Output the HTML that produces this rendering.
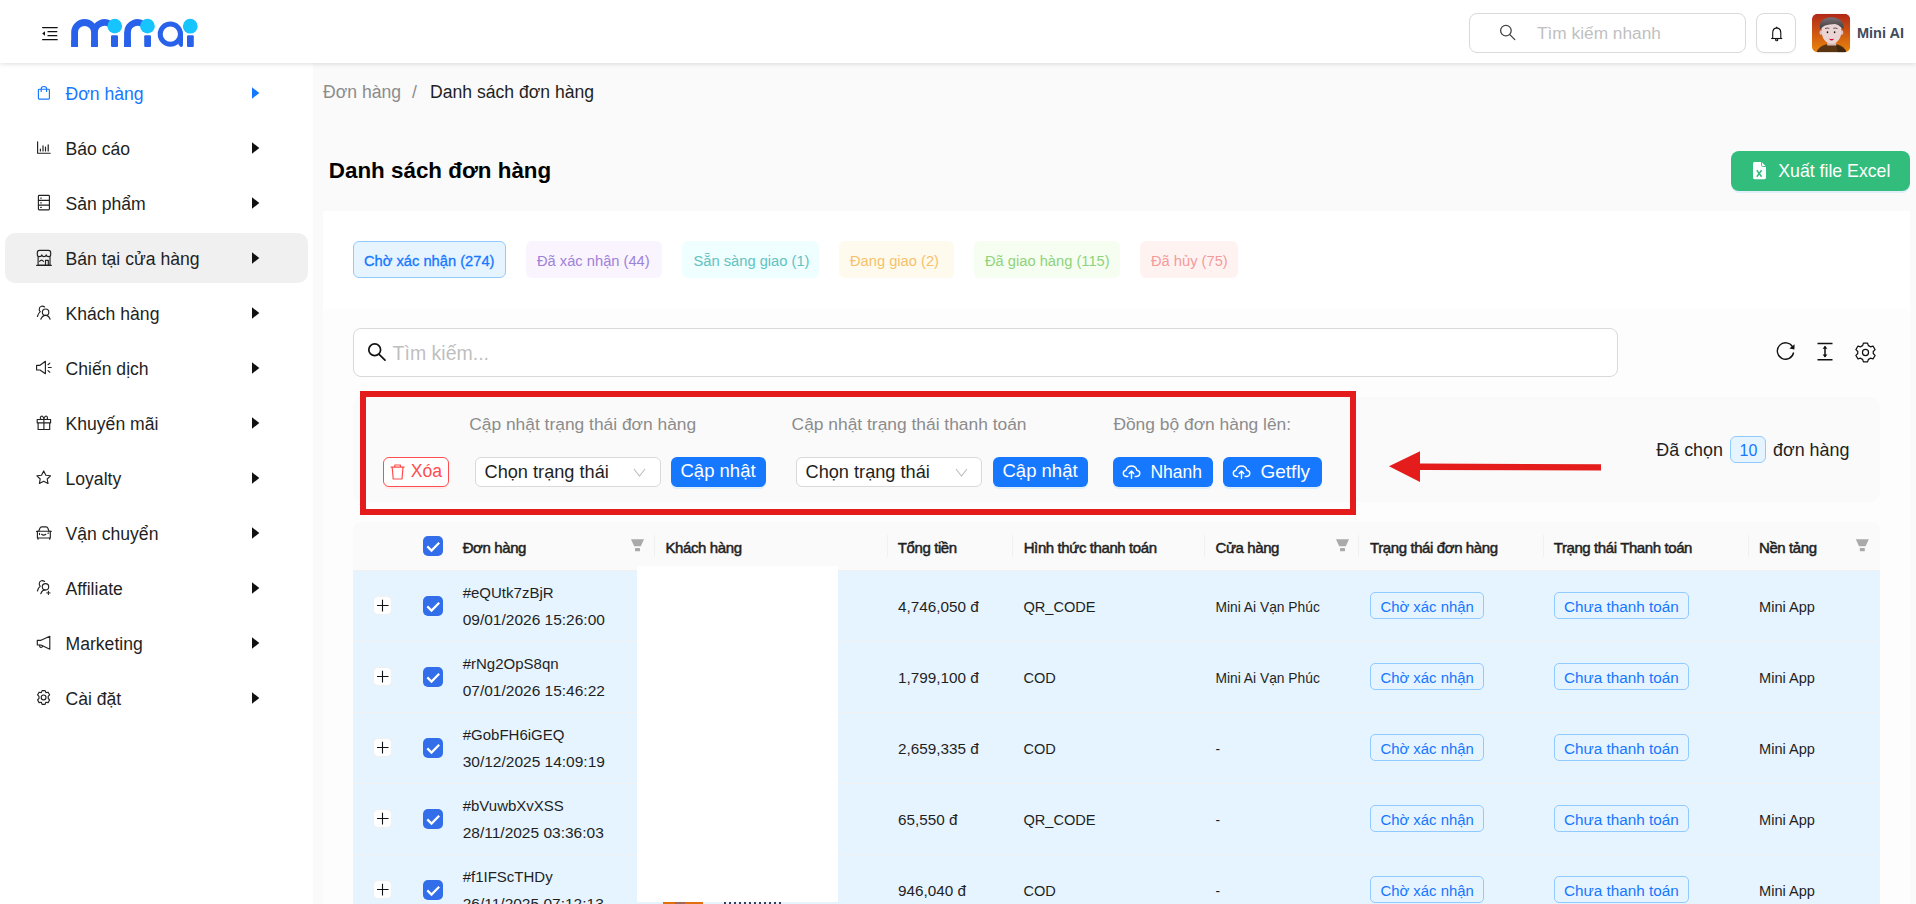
<!DOCTYPE html>
<html><head><meta charset="utf-8">
<style>
html,body{margin:0;padding:0;}
body{width:1916px;height:904px;overflow:hidden;position:relative;background:#fafafa;font-family:"Liberation Sans", sans-serif;}
.t{position:absolute;white-space:nowrap;line-height:1;}
</style></head><body>
<div style="position:absolute;left:0px;top:0px;width:1916px;height:63px;box-sizing:border-box;background:#fff;box-shadow:0 1px 5px rgba(0,0,0,0.13);z-index:2"></div>
<div style="position:absolute;left:0px;top:63px;width:313px;height:841px;box-sizing:border-box;background:#fff"></div>
<div style="position:absolute;left:5px;top:233px;width:303px;height:50px;box-sizing:border-box;background:#f0f0f0;border-radius:10px"></div>
<div class="t" style="left:65.5px;top:85.70px;font-size:17.6px;color:#1677ff;font-weight:400;">Đơn hàng</div>
<div class="t" style="left:65.5px;top:140.70px;font-size:17.6px;color:#1f1f1f;font-weight:400;">Báo cáo</div>
<div class="t" style="left:65.5px;top:195.70px;font-size:17.6px;color:#1f1f1f;font-weight:400;">Sản phẩm</div>
<div class="t" style="left:65.5px;top:250.70px;font-size:17.6px;color:#1f1f1f;font-weight:400;">Bán tại cửa hàng</div>
<div class="t" style="left:65.5px;top:305.70px;font-size:17.6px;color:#1f1f1f;font-weight:400;">Khách hàng</div>
<div class="t" style="left:65.5px;top:360.70px;font-size:17.6px;color:#1f1f1f;font-weight:400;">Chiến dịch</div>
<div class="t" style="left:65.5px;top:415.70px;font-size:17.6px;color:#1f1f1f;font-weight:400;">Khuyến mãi</div>
<div class="t" style="left:65.5px;top:470.70px;font-size:17.6px;color:#1f1f1f;font-weight:400;">Loyalty</div>
<div class="t" style="left:65.5px;top:525.70px;font-size:17.6px;color:#1f1f1f;font-weight:400;">Vận chuyển</div>
<div class="t" style="left:65.5px;top:580.70px;font-size:17.6px;color:#1f1f1f;font-weight:400;">Affiliate</div>
<div class="t" style="left:65.5px;top:635.70px;font-size:17.6px;color:#1f1f1f;font-weight:400;">Marketing</div>
<div class="t" style="left:65.5px;top:690.70px;font-size:17.6px;color:#1f1f1f;font-weight:400;">Cài đặt</div>
<div class="t" style="left:323px;top:84.10px;font-size:17.6px;color:#8c8c8c;font-weight:400;">Đơn hàng</div>
<div class="t" style="left:412px;top:84.10px;font-size:17.6px;color:#8c8c8c;font-weight:400;">/</div>
<div class="t" style="left:430px;top:84.10px;font-size:17.6px;color:#1f1f1f;font-weight:400;">Danh sách đơn hàng</div>
<div class="t" style="left:328.8px;top:160.04px;font-size:22.4px;color:#000;font-weight:700;">Danh sách đơn hàng</div>
<div style="position:absolute;left:1731px;top:151px;width:179px;height:40px;box-sizing:border-box;background:#33bd7c;border-radius:8px;box-shadow:0 2px 0 rgba(5,145,255,0.1)"></div>
<div class="t" style="left:1778.3px;top:162.82px;font-size:17.7px;color:#fff;font-weight:400;">Xuất file Excel</div>
<div style="position:absolute;left:323px;top:211px;width:1587px;height:693px;box-sizing:border-box;background:#fff"></div>
<div style="position:absolute;left:323px;top:308px;width:1587px;height:596px;box-sizing:border-box;background:#fdfdfd;border-radius:8px 8px 0 0"></div>
<div style="position:absolute;left:353px;top:241px;width:153px;height:37px;box-sizing:border-box;background:#e6f4ff;border:1px solid #91caff;border-radius:6px"></div>
<div class="t" style="left:364px;top:253.56px;font-size:14.7px;color:#1677ff;font-weight:400;-webkit-text-stroke:0.3px #1677ff">Chờ xác nhận (274)</div>
<div style="position:absolute;left:526px;top:241px;width:136px;height:37px;box-sizing:border-box;background:#faf4ff;border:none;border-radius:6px"></div>
<div class="t" style="left:537px;top:253.56px;font-size:14.7px;color:#9e82d6;font-weight:400;">Đã xác nhận (44)</div>
<div style="position:absolute;left:682px;top:241px;width:137px;height:37px;box-sizing:border-box;background:#effefe;border:none;border-radius:6px"></div>
<div class="t" style="left:693.5px;top:253.56px;font-size:14.7px;color:#62c2c2;font-weight:400;">Sẵn sàng giao (1)</div>
<div style="position:absolute;left:839px;top:241px;width:115px;height:37px;box-sizing:border-box;background:#fffaee;border:none;border-radius:6px"></div>
<div class="t" style="left:850px;top:253.56px;font-size:14.7px;color:#f5c26b;font-weight:400;">Đang giao (2)</div>
<div style="position:absolute;left:974px;top:241px;width:146px;height:37px;box-sizing:border-box;background:#f6fdf1;border:none;border-radius:6px"></div>
<div class="t" style="left:985px;top:253.56px;font-size:14.7px;color:#8fd47a;font-weight:400;">Đã giao hàng (115)</div>
<div style="position:absolute;left:1140px;top:241px;width:98px;height:37px;box-sizing:border-box;background:#fff3f2;border:none;border-radius:6px"></div>
<div class="t" style="left:1151px;top:253.56px;font-size:14.7px;color:#f59a9a;font-weight:400;">Đã hủy (75)</div>
<div style="position:absolute;left:353px;top:328px;width:1265px;height:49px;box-sizing:border-box;border:1px solid #d9d9d9;border-radius:8px;background:#fff"></div>
<div class="t" style="left:392.6px;top:344.49px;font-size:19.5px;color:#bfbfbf;font-weight:400;">Tìm kiếm...</div>
<div style="position:absolute;left:353px;top:397px;width:1527px;height:105px;box-sizing:border-box;background:#fafafa;border-radius:10px"></div>
<div style="position:absolute;left:383px;top:457px;width:66px;height:30px;box-sizing:border-box;border:1px solid #ff4d4f;border-radius:6px;background:#fff;box-shadow:0 2px 0 rgba(255,38,5,0.06)"></div>
<div class="t" style="left:410.8px;top:463.10px;font-size:17.6px;color:#ff4d4f;font-weight:400;">Xóa</div>
<div class="t" style="left:469.2px;top:416.27px;font-size:17.4px;color:#8c8c8c;font-weight:400;">Cập nhật trạng thái đơn hàng</div>
<div class="t" style="left:791.6px;top:416.27px;font-size:17.4px;color:#8c8c8c;font-weight:400;">Cập nhật trạng thái thanh toán</div>
<div class="t" style="left:1113.4px;top:416.27px;font-size:17.4px;color:#8c8c8c;font-weight:400;">Đồng bộ đơn hàng lên:</div>
<div style="position:absolute;left:475px;top:457px;width:186px;height:30px;box-sizing:border-box;border:1px solid #d9d9d9;border-radius:6px;background:#fff"></div>
<div class="t" style="left:484.5px;top:462.59px;font-size:18.2px;color:#1f1f1f;font-weight:400;">Chọn trạng thái</div>
<div style="position:absolute;left:796px;top:457px;width:186px;height:30px;box-sizing:border-box;border:1px solid #d9d9d9;border-radius:6px;background:#fff"></div>
<div class="t" style="left:805.5px;top:462.59px;font-size:18.2px;color:#1f1f1f;font-weight:400;">Chọn trạng thái</div>
<div style="position:absolute;left:671px;top:457px;width:95px;height:30px;box-sizing:border-box;background:#1677ff;border-radius:6px;box-shadow:0 2px 0 rgba(5,145,255,0.1)"></div>
<div class="t" style="left:680.5px;top:462.34px;font-size:18.5px;color:#fff;font-weight:400;">Cập nhật</div>
<div style="position:absolute;left:993px;top:457px;width:95px;height:30px;box-sizing:border-box;background:#1677ff;border-radius:6px;box-shadow:0 2px 0 rgba(5,145,255,0.1)"></div>
<div class="t" style="left:1002.5px;top:462.34px;font-size:18.5px;color:#fff;font-weight:400;">Cập nhật</div>
<div style="position:absolute;left:1113px;top:457px;width:100px;height:30px;box-sizing:border-box;background:#1677ff;border-radius:6px;box-shadow:0 2px 0 rgba(5,145,255,0.1)"></div>
<div class="t" style="left:1150.4px;top:464.19px;font-size:17.5px;color:#fff;font-weight:400;">Nhanh</div>
<div style="position:absolute;left:1223px;top:457px;width:99px;height:30px;box-sizing:border-box;background:#1677ff;border-radius:6px;box-shadow:0 2px 0 rgba(5,145,255,0.1)"></div>
<div class="t" style="left:1260.5px;top:461.92px;font-size:19px;color:#fff;font-weight:400;">Getfly</div>
<div class="t" style="left:1656.3px;top:441.85px;font-size:17.9px;color:#1f1f1f;font-weight:400;">Đã chọn</div>
<div style="position:absolute;left:1730px;top:436px;width:36px;height:27px;box-sizing:border-box;background:#e6f4ff;border:1px solid #91caff;border-radius:6px"></div>
<div class="t" style="left:1739.5px;top:442.96px;font-size:16px;color:#1677ff;font-weight:400;">10</div>
<div class="t" style="left:1773px;top:441.85px;font-size:17.9px;color:#1f1f1f;font-weight:400;">đơn hàng</div>
<div style="position:absolute;left:360px;top:391px;width:996px;height:124px;box-sizing:border-box;border:6px solid #e41c1c"></div>
<div style="position:absolute;left:353px;top:522px;width:1527px;height:49px;box-sizing:border-box;background:#fafafa;border-radius:8px 8px 0 0;border-bottom:1px solid #f0f0f0"></div>
<div class="t" style="left:462.7px;top:539.60px;font-size:15px;color:#1f1f1f;font-weight:400;letter-spacing:-0.4px;-webkit-text-stroke:0.5px #1f1f1f">Đơn hàng</div>
<div class="t" style="left:665.5px;top:539.60px;font-size:15px;color:#1f1f1f;font-weight:400;letter-spacing:-0.4px;-webkit-text-stroke:0.5px #1f1f1f">Khách hàng</div>
<div class="t" style="left:897.8px;top:539.60px;font-size:15px;color:#1f1f1f;font-weight:400;letter-spacing:-0.4px;-webkit-text-stroke:0.5px #1f1f1f">Tổng tiền</div>
<div class="t" style="left:1023.7px;top:539.60px;font-size:15px;color:#1f1f1f;font-weight:400;letter-spacing:-0.4px;-webkit-text-stroke:0.5px #1f1f1f">Hình thức thanh toán</div>
<div class="t" style="left:1215.5px;top:539.60px;font-size:15px;color:#1f1f1f;font-weight:400;letter-spacing:-0.4px;-webkit-text-stroke:0.5px #1f1f1f">Cửa hàng</div>
<div class="t" style="left:1370px;top:539.60px;font-size:15px;color:#1f1f1f;font-weight:400;letter-spacing:-0.4px;-webkit-text-stroke:0.5px #1f1f1f">Trạng thái đơn hàng</div>
<div class="t" style="left:1553.7px;top:539.60px;font-size:15px;color:#1f1f1f;font-weight:400;letter-spacing:-0.4px;-webkit-text-stroke:0.5px #1f1f1f">Trạng thái Thanh toán</div>
<div class="t" style="left:1759px;top:539.60px;font-size:15px;color:#1f1f1f;font-weight:400;letter-spacing:-0.4px;-webkit-text-stroke:0.5px #1f1f1f">Nền tảng</div>
<div style="position:absolute;left:654px;top:535px;width:1px;height:22px;box-sizing:border-box;background:#f0f0f0"></div>
<div style="position:absolute;left:887px;top:535px;width:1px;height:22px;box-sizing:border-box;background:#f0f0f0"></div>
<div style="position:absolute;left:1012px;top:535px;width:1px;height:22px;box-sizing:border-box;background:#f0f0f0"></div>
<div style="position:absolute;left:1204px;top:535px;width:1px;height:22px;box-sizing:border-box;background:#f0f0f0"></div>
<div style="position:absolute;left:1358px;top:535px;width:1px;height:22px;box-sizing:border-box;background:#f0f0f0"></div>
<div style="position:absolute;left:1543px;top:535px;width:1px;height:22px;box-sizing:border-box;background:#f0f0f0"></div>
<div style="position:absolute;left:1748px;top:535px;width:1px;height:22px;box-sizing:border-box;background:#f0f0f0"></div>
<div style="position:absolute;left:353px;top:571px;width:1527px;height:71px;box-sizing:border-box;background:#e6f4ff;border-bottom:1px solid #f0f0f0"></div>
<div style="position:absolute;left:373px;top:596px;width:19px;height:19px;box-sizing:border-box;background:#fff;border:1px solid #f0f0f0;border-radius:5px"></div>
<div style="position:absolute;left:423px;top:596px;width:20px;height:20px;box-sizing:border-box;background:#326ee9;border-radius:5px"></div>
<div class="t" style="left:462.7px;top:585.30px;font-size:15px;color:#1f1f1f;font-weight:400;">#eQUtk7zBjR</div>
<div class="t" style="left:462.7px;top:611.88px;font-size:15.5px;color:#1f1f1f;font-weight:400;">09/01/2026 15:26:00</div>
<div class="t" style="left:898px;top:599.35px;font-size:15.3px;color:#1f1f1f;font-weight:400;">4,746,050 đ</div>
<div class="t" style="left:1023.4px;top:599.94px;font-size:14.6px;color:#1f1f1f;font-weight:400;">QR_CODE</div>
<div class="t" style="left:1215.5px;top:600.62px;font-size:13.8px;color:#1f1f1f;font-weight:400;">Mini Ai Vạn Phúc</div>
<div style="position:absolute;left:1370px;top:592px;width:114px;height:27px;box-sizing:border-box;border:1px solid #91caff;border-radius:5px"></div>
<div class="t" style="left:1380.4px;top:599.69px;font-size:14.9px;color:#1677ff;font-weight:400;">Chờ xác nhận</div>
<div style="position:absolute;left:1554px;top:592px;width:135px;height:27px;box-sizing:border-box;border:1px solid #91caff;border-radius:5px"></div>
<div class="t" style="left:1564px;top:599.35px;font-size:15.3px;color:#1677ff;font-weight:400;">Chưa thanh toán</div>
<div class="t" style="left:1759px;top:599.94px;font-size:14.6px;color:#1f1f1f;font-weight:400;">Mini App</div>
<div style="position:absolute;left:353px;top:642px;width:1527px;height:71px;box-sizing:border-box;background:#e6f4ff;border-bottom:1px solid #f0f0f0"></div>
<div style="position:absolute;left:373px;top:667px;width:19px;height:19px;box-sizing:border-box;background:#fff;border:1px solid #f0f0f0;border-radius:5px"></div>
<div style="position:absolute;left:423px;top:667px;width:20px;height:20px;box-sizing:border-box;background:#326ee9;border-radius:5px"></div>
<div class="t" style="left:462.7px;top:656.30px;font-size:15px;color:#1f1f1f;font-weight:400;">#rNg2OpS8qn</div>
<div class="t" style="left:462.7px;top:682.88px;font-size:15.5px;color:#1f1f1f;font-weight:400;">07/01/2026 15:46:22</div>
<div class="t" style="left:898px;top:670.35px;font-size:15.3px;color:#1f1f1f;font-weight:400;">1,799,100 đ</div>
<div class="t" style="left:1023.4px;top:670.94px;font-size:14.6px;color:#1f1f1f;font-weight:400;">COD</div>
<div class="t" style="left:1215.5px;top:671.62px;font-size:13.8px;color:#1f1f1f;font-weight:400;">Mini Ai Vạn Phúc</div>
<div style="position:absolute;left:1370px;top:663px;width:114px;height:27px;box-sizing:border-box;border:1px solid #91caff;border-radius:5px"></div>
<div class="t" style="left:1380.4px;top:670.69px;font-size:14.9px;color:#1677ff;font-weight:400;">Chờ xác nhận</div>
<div style="position:absolute;left:1554px;top:663px;width:135px;height:27px;box-sizing:border-box;border:1px solid #91caff;border-radius:5px"></div>
<div class="t" style="left:1564px;top:670.35px;font-size:15.3px;color:#1677ff;font-weight:400;">Chưa thanh toán</div>
<div class="t" style="left:1759px;top:670.94px;font-size:14.6px;color:#1f1f1f;font-weight:400;">Mini App</div>
<div style="position:absolute;left:353px;top:713px;width:1527px;height:71px;box-sizing:border-box;background:#e6f4ff;border-bottom:1px solid #f0f0f0"></div>
<div style="position:absolute;left:373px;top:738px;width:19px;height:19px;box-sizing:border-box;background:#fff;border:1px solid #f0f0f0;border-radius:5px"></div>
<div style="position:absolute;left:423px;top:738px;width:20px;height:20px;box-sizing:border-box;background:#326ee9;border-radius:5px"></div>
<div class="t" style="left:462.7px;top:727.30px;font-size:15px;color:#1f1f1f;font-weight:400;">#GobFH6iGEQ</div>
<div class="t" style="left:462.7px;top:753.88px;font-size:15.5px;color:#1f1f1f;font-weight:400;">30/12/2025 14:09:19</div>
<div class="t" style="left:898px;top:741.35px;font-size:15.3px;color:#1f1f1f;font-weight:400;">2,659,335 đ</div>
<div class="t" style="left:1023.4px;top:741.94px;font-size:14.6px;color:#1f1f1f;font-weight:400;">COD</div>
<div class="t" style="left:1215.5px;top:742.62px;font-size:13.8px;color:#1f1f1f;font-weight:400;">-</div>
<div style="position:absolute;left:1370px;top:734px;width:114px;height:27px;box-sizing:border-box;border:1px solid #91caff;border-radius:5px"></div>
<div class="t" style="left:1380.4px;top:741.69px;font-size:14.9px;color:#1677ff;font-weight:400;">Chờ xác nhận</div>
<div style="position:absolute;left:1554px;top:734px;width:135px;height:27px;box-sizing:border-box;border:1px solid #91caff;border-radius:5px"></div>
<div class="t" style="left:1564px;top:741.35px;font-size:15.3px;color:#1677ff;font-weight:400;">Chưa thanh toán</div>
<div class="t" style="left:1759px;top:741.94px;font-size:14.6px;color:#1f1f1f;font-weight:400;">Mini App</div>
<div style="position:absolute;left:353px;top:784px;width:1527px;height:71px;box-sizing:border-box;background:#e6f4ff;border-bottom:1px solid #f0f0f0"></div>
<div style="position:absolute;left:373px;top:809px;width:19px;height:19px;box-sizing:border-box;background:#fff;border:1px solid #f0f0f0;border-radius:5px"></div>
<div style="position:absolute;left:423px;top:809px;width:20px;height:20px;box-sizing:border-box;background:#326ee9;border-radius:5px"></div>
<div class="t" style="left:462.7px;top:798.30px;font-size:15px;color:#1f1f1f;font-weight:400;">#bVuwbXvXSS</div>
<div class="t" style="left:462.7px;top:824.88px;font-size:15.5px;color:#1f1f1f;font-weight:400;">28/11/2025 03:36:03</div>
<div class="t" style="left:898px;top:812.35px;font-size:15.3px;color:#1f1f1f;font-weight:400;">65,550 đ</div>
<div class="t" style="left:1023.4px;top:812.94px;font-size:14.6px;color:#1f1f1f;font-weight:400;">QR_CODE</div>
<div class="t" style="left:1215.5px;top:813.62px;font-size:13.8px;color:#1f1f1f;font-weight:400;">-</div>
<div style="position:absolute;left:1370px;top:805px;width:114px;height:27px;box-sizing:border-box;border:1px solid #91caff;border-radius:5px"></div>
<div class="t" style="left:1380.4px;top:812.69px;font-size:14.9px;color:#1677ff;font-weight:400;">Chờ xác nhận</div>
<div style="position:absolute;left:1554px;top:805px;width:135px;height:27px;box-sizing:border-box;border:1px solid #91caff;border-radius:5px"></div>
<div class="t" style="left:1564px;top:812.35px;font-size:15.3px;color:#1677ff;font-weight:400;">Chưa thanh toán</div>
<div class="t" style="left:1759px;top:812.94px;font-size:14.6px;color:#1f1f1f;font-weight:400;">Mini App</div>
<div style="position:absolute;left:353px;top:855px;width:1527px;height:71px;box-sizing:border-box;background:#e6f4ff;border-bottom:1px solid #f0f0f0"></div>
<div style="position:absolute;left:373px;top:880px;width:19px;height:19px;box-sizing:border-box;background:#fff;border:1px solid #f0f0f0;border-radius:5px"></div>
<div style="position:absolute;left:423px;top:880px;width:20px;height:20px;box-sizing:border-box;background:#326ee9;border-radius:5px"></div>
<div class="t" style="left:462.7px;top:869.30px;font-size:15px;color:#1f1f1f;font-weight:400;">#f1IFScTHDy</div>
<div class="t" style="left:462.7px;top:895.88px;font-size:15.5px;color:#1f1f1f;font-weight:400;">26/11/2025 07:12:13</div>
<div class="t" style="left:898px;top:883.35px;font-size:15.3px;color:#1f1f1f;font-weight:400;">946,040 đ</div>
<div class="t" style="left:1023.4px;top:883.94px;font-size:14.6px;color:#1f1f1f;font-weight:400;">COD</div>
<div class="t" style="left:1215.5px;top:884.62px;font-size:13.8px;color:#1f1f1f;font-weight:400;">-</div>
<div style="position:absolute;left:1370px;top:876px;width:114px;height:27px;box-sizing:border-box;border:1px solid #91caff;border-radius:5px"></div>
<div class="t" style="left:1380.4px;top:883.69px;font-size:14.9px;color:#1677ff;font-weight:400;">Chờ xác nhận</div>
<div style="position:absolute;left:1554px;top:876px;width:135px;height:27px;box-sizing:border-box;border:1px solid #91caff;border-radius:5px"></div>
<div class="t" style="left:1564px;top:883.35px;font-size:15.3px;color:#1677ff;font-weight:400;">Chưa thanh toán</div>
<div class="t" style="left:1759px;top:883.94px;font-size:14.6px;color:#1f1f1f;font-weight:400;">Mini App</div>
<div style="position:absolute;left:423px;top:536px;width:20px;height:20px;box-sizing:border-box;background:#326ee9;border-radius:5px"></div>
<div style="position:absolute;left:637px;top:566px;width:201px;height:336px;box-sizing:border-box;background:#fff"></div>
<div style="position:absolute;left:663px;top:902px;width:40px;height:2px;box-sizing:border-box;background:linear-gradient(90deg,#e0700f 0,#e0700f 30%,#a06a5a 30%,#a06a5a 55%,#e0700f 55%)"></div>
<div style="position:absolute;left:724px;top:902px;width:60px;height:2px;box-sizing:border-box;background:repeating-linear-gradient(90deg,#3a3a5a 0,#3a3a5a 2px,transparent 2px,transparent 5px)"></div>
<div style="position:absolute;left:1469px;top:13px;width:277px;height:40px;box-sizing:border-box;border:1px solid #d9d9d9;border-radius:8px;background:#fff;z-index:3"></div>
<div class="t" style="left:1537px;top:24.86px;font-size:17.3px;color:#bfbfbf;font-weight:400;z-index:4">Tìm kiếm nhanh</div>
<div style="position:absolute;left:1756px;top:13px;width:40px;height:40px;box-sizing:border-box;border:1px solid #d9d9d9;border-radius:8px;background:#fff;box-shadow:0 2px 0 rgba(0,0,0,0.02);z-index:3"></div>
<div class="t" style="left:1857px;top:26.03px;font-size:14.5px;color:#404c5c;font-weight:700;z-index:4">Mini AI</div>

<svg style="position:absolute;left:0;top:0;z-index:10" width="1916" height="904" viewBox="0 0 1916 904">
<defs>
<linearGradient id="avg" x1="0" y1="0" x2="0" y2="1"><stop offset="0" stop-color="#b02818"/><stop offset="1" stop-color="#ea860c"/></linearGradient>
<linearGradient id="hair" x1="0" y1="0" x2="0" y2="1"><stop offset="0" stop-color="#7a7276"/><stop offset="1" stop-color="#3f383c"/></linearGradient>
<clipPath id="avc"><rect x="1812" y="13.8" width="38.2" height="38.4" rx="5.5"/></clipPath>
</defs>
<!-- hamburger -->
<g stroke="#111" stroke-width="1.25" fill="none" stroke-linecap="round">
<path d="M42.6 27.5H57.2M48 31.7H56.8M48 35.7H56.8M42.6 39.7H57.2"/>
</g>
<path d="M42.2 33.5L45 31.2V35.8Z" fill="#111"/>
<!-- logo -->
<g fill="none" stroke="#2962ea" stroke-width="6.8">
<path d="M74.6 47V32.45A9.95 9.95 0 0 1 94.5 32.45V47"/>
<path d="M94.5 32.45A9.95 9.95 0 0 1 112 26"/>
<path d="M127.5 47V32.45A9.95 9.95 0 0 1 145 26"/>
</g>
<g fill="#2962ea">
<rect x="111" y="35.3" width="7" height="11.7" rx="1.2"/>
<rect x="144.2" y="35.3" width="6.8" height="11.7" rx="1.2"/>
<rect x="187" y="35.3" width="6.8" height="11.7" rx="1.2"/>
<rect x="71.2" y="40" width="6.8" height="7" rx="1.2"/>
<rect x="91.1" y="40" width="6.8" height="7" rx="1.2"/>
<rect x="124.1" y="40" width="6.8" height="7" rx="1.2"/>
<path d="M178 34.1H183V45A2 2 0 0 1 181 47H180.5L178.5 44.5Z"/>
</g>
<circle cx="170.35" cy="34.1" r="10.15" fill="none" stroke="#2962ea" stroke-width="5"/>
<g fill="#17c5fe">
<circle cx="114.75" cy="26.15" r="7.35"/>
<circle cx="147.45" cy="26.15" r="7.35"/>
<circle cx="190.25" cy="26.15" r="7.4"/>
</g>
<!-- header search icon -->
<g fill="none" stroke="#444" stroke-width="1.3" stroke-linecap="round">
<circle cx="1505.9" cy="30.6" r="5.3"/>
<path d="M1509.8 34.6L1514.8 39.6"/>
</g>
<!-- bell -->
<g fill="none" stroke="#111" stroke-width="1.1" stroke-linejoin="round">
<path d="M1772.7 38.4V32.9Q1772.7 28.3 1776.7 27.9Q1780.8 28.3 1780.8 32.9V38.4"/>
<path d="M1771.2 38.5H1782.2"/>
<path d="M1776.7 27.9V26.7"/>
<circle cx="1776.7" cy="39.7" r="1.1"/>
</g>
<!-- avatar -->
<g clip-path="url(#avc)">
<rect x="1812" y="13.8" width="38.2" height="38.4" fill="url(#avg)"/>
<path d="M1816.5 52.5Q1818.5 46 1826.5 44.2H1837Q1845 46 1846.5 52.5Z" fill="#5a3513"/>
<path d="M1836 45Q1843 46.5 1846.5 52.5H1838Z" fill="#2e1c0c" opacity="0.6"/>
<rect x="1827.2" y="39" width="9" height="6.5" fill="#d8b8b8"/>
<ellipse cx="1820.9" cy="32.6" rx="1.4" ry="2.4" fill="#dcbcbc"/>
<ellipse cx="1841.9" cy="32.6" rx="1.4" ry="2.4" fill="#dcbcbc"/>
<path d="M1821.6 27Q1821.6 23 1831.5 23Q1841.4 23 1841.4 28V32.5Q1841 38 1837 41.8Q1834.5 43.8 1831.5 43.8Q1828.5 43.8 1826 41.8Q1822 38 1821.6 32.5Z" fill="#ead4d4"/>
<path d="M1820 29.5Q1819 23 1822.5 20Q1826 17 1831 17.2Q1837.5 17.5 1841 20.5Q1844 23.5 1843.5 29.5Q1842 27.5 1840 26.5Q1838.5 24.5 1835 24Q1829 24 1825 25.5Q1822 27 1820 29.5Z" fill="url(#hair)"/>
<path d="M1825 28.6Q1827.2 27.6 1829.3 28.3M1833.3 28.3Q1835.4 27.6 1837.5 28.6" stroke="#4a3f42" stroke-width="0.9" fill="none"/>
<ellipse cx="1827.5" cy="32.3" rx="0.8" ry="1" fill="#111"/>
<ellipse cx="1834.6" cy="32.3" rx="0.8" ry="1" fill="#111"/>
<path d="M1829.2 38.3H1834Q1833.8 40.6 1831.6 40.6Q1829.4 40.6 1829.2 38.3Z" fill="#c8102e"/>
<rect x="1829.4" y="38.1" width="4.4" height="0.8" fill="#f3f0f0"/>
</g>
<!-- sidebar icons -->
<g fill="none" stroke="#1677ff" stroke-width="1.15" stroke-linejoin="round">
<rect x="38.4" y="89.2" width="11" height="9.9" rx="0.8"/>
<path d="M41.2 92V89Q41.2 86.5 43.9 86.5Q46.6 86.5 46.6 89V92"/>
</g>
<g fill="none" stroke="#222" stroke-width="1.15" stroke-linecap="round" stroke-linejoin="round">
<!-- chart -->
<path d="M37.6 141.8V153.2H50.2"/>
<path d="M40.4 149.2V151M43 145.8V151M45.5 147.2V151M48.2 144.8V151" stroke-width="1.2"/>
<!-- server -->
<rect x="38.4" y="195.4" width="11" height="14.5" rx="0.8"/>
<path d="M38.4 200.4H49.4M38.4 205.1H49.4"/>
<path d="M40.7 198.1H41.3M40.7 202.8H41.3M40.7 207.4H41.3"/>
<!-- store -->
<path d="M37.3 253Q37.3 250.4 39.5 250.4H48.5Q50.7 250.4 50.7 253V254.5Q50.7 256.6 48.6 256.6Q46.5 256.6 46.2 254.8Q45.8 256.6 44 256.6Q42.2 256.6 41.8 254.8Q41.5 256.6 39.4 256.6Q37.3 256.6 37.3 254.5Z"/>
<path d="M38.1 256.6V265H50V256.6M36.6 265.3H51.4"/>
<path d="M45.5 265V260.3H48.3V265M39.6 261.4Q41.5 258.8 43.5 261.4"/>
<!-- users -->
<circle cx="45.6" cy="312.2" r="3.2"/>
<path d="M40.8 319.2Q42.3 315.3 45.6 315.3Q48.8 315.3 50.1 319.2"/>
<path d="M44.6 307Q43.2 305.9 41.4 306.2Q39.3 306.7 39.2 309.2Q39.3 310.8 40.3 311.6Q38.4 313 37.4 316.5"/>
<!-- megaphone sound -->
<path d="M36.6 365.3H40L45.4 361.3V373.7L40 370H36.6Z"/>
<path d="M48 364.7L49.8 363.1M48.4 367.5H51.2M48 370.6L49.8 372.2"/>
<!-- gift -->
<path d="M37.2 419.5H50.6V422.8H37.2ZM38.1 422.8V429.5H49.7V422.8M43.9 419.5V429.5"/>
<path d="M43.9 419.3Q40 420 40.3 417.6Q40.8 415.8 42.3 416.3Q43.6 416.9 43.9 419.3Q44.2 416.9 45.5 416.3Q47 415.8 47.5 417.6Q47.8 420 43.9 419.3"/>
<!-- star -->
<path d="M43.7 470.9L45.9 475.2L50.5 475.8L47.2 479L48 483.5L43.7 481.3L39.4 483.5L40.2 479L36.9 475.8L41.5 475.2Z"/>
<!-- car -->
<path d="M37.4 531.2H50.3V538H37.4Z"/>
<path d="M38.7 531.2L39.9 528.2Q40.4 526.9 41.8 526.9H46Q47.4 526.9 47.9 528.2L49 531.2"/>
<path d="M36.5 531.3H37.4M50.3 531.3H51.3M38 538V539.2M49.7 538V539.2"/>
<path d="M39.5 533.3V534.6M41.6 534.3Q43.6 535.9 45.8 534.3M48 533.3L48.6 533"/>
<!-- affiliate -->
<circle cx="45.5" cy="586.8" r="3.2"/>
<path d="M40.8 593.7Q42.3 589.9 45.2 589.9"/>
<path d="M44.6 581.5Q43.2 580.4 41.4 580.7Q39.3 581.2 39.2 583.7Q39.3 585.3 40.3 586.1Q38.4 587.5 37.4 591"/>
<path d="M48.4 591.2V594.6M46.7 592.9H50.1" stroke-width="1"/>
<!-- megaphone -->
<path d="M37.3 640.3H41L49.8 636.3V649.2L41 645H37.3Z"/>
<path d="M39.8 645.2Q39.3 647.3 41 647.5Q42.3 647.5 42.6 646.2"/>
<!-- gear -->
<path d="M42.1 690.6H45.1L45.9 692.6L48.1 692.2L49.6 694.8L48.2 696.4V698.4L49.6 700L48.1 702.6L45.9 702.3L45.1 704.3H42.1L41.3 702.3L39.1 702.6L37.6 700L39 698.4V696.4L37.6 694.8L39.1 692.2L41.3 692.6Z"/>
<circle cx="43.6" cy="697.4" r="2.4"/>
</g>
<!-- sidebar arrows -->
<g fill="#111">
<path d="M252 87.3V98.7L259.3 93Z" fill="#1677ff"/>
<path d="M252 142.3V153.7L259.3 148Z"/>
<path d="M252 197.3V208.7L259.3 203Z"/>
<path d="M252 252.3V263.7L259.3 258Z"/>
<path d="M252 307.3V318.7L259.3 313Z"/>
<path d="M252 362.3V373.7L259.3 368Z"/>
<path d="M252 417.3V428.7L259.3 423Z"/>
<path d="M252 472.3V483.7L259.3 478Z"/>
<path d="M252 527.3V538.7L259.3 533Z"/>
<path d="M252 582.3V593.7L259.3 588Z"/>
<path d="M252 637.3V648.7L259.3 643Z"/>
<path d="M252 692.3V703.7L259.3 698Z"/>
</g>
<!-- excel icon -->
<path d="M1754.5 162H1761.5L1766 166.5V177.6Q1766 179.2 1764.4 179.2H1754.6Q1753 179.2 1753 177.6V163.6Q1753 162 1754.5 162Z" fill="#fff"/>
<path d="M1761.5 162V165.2Q1761.5 166.5 1762.8 166.5H1766" fill="none" stroke="#33bd7c" stroke-width="0.9"/>
<path d="M1756.8 170.2L1761.6 176.8M1761.6 170.2L1756.8 176.8" stroke="#33bd7c" stroke-width="1.5"/>
<!-- content search icon -->
<g fill="none" stroke="#111" stroke-width="1.7" stroke-linecap="round">
<circle cx="374.7" cy="349.7" r="5.9"/>
<path d="M379.1 354.3L385 360.2"/>
</g>
<!-- reload -->
<g fill="none" stroke="#111" stroke-width="1.35">
<path d="M1792.6 346.8A8.2 8.2 0 1 0 1793.6 352.5"/>
</g>
<path d="M1794.6 344.2L1794.4 349.4L1789.4 348.4Z" fill="#111"/>
<!-- column height -->
<g fill="none" stroke="#111" stroke-width="1.5">
<path d="M1817.5 343.4H1832.5M1817.5 359.8H1832.5M1825 346.5V356.7"/>
</g>
<path d="M1822.6 348.8L1825 345.8L1827.4 348.8ZM1822.6 354.4L1825 357.4L1827.4 354.4Z" fill="#111"/>
<!-- gear setting -->
<g fill="none" stroke="#111" stroke-width="1.3" stroke-linejoin="round" transform="translate(1865.5 352.5) scale(0.95) translate(-1865.5 -352.5)">
<path d="M1863.3 342.6H1867.7L1868.5 345.3Q1869.7 345.8 1870.7 346.5L1873.4 345.7L1875.6 349.5L1873.6 351.5Q1873.8 352.7 1873.6 353.5L1875.6 355.5L1873.4 359.3L1870.7 358.5Q1869.7 359.2 1868.5 359.7L1867.7 362.4H1863.3L1862.5 359.7Q1861.3 359.2 1860.3 358.5L1857.6 359.3L1855.4 355.5L1857.4 353.5Q1857.2 352.5 1857.4 351.5L1855.4 349.5L1857.6 345.7L1860.3 346.5Q1861.3 345.8 1862.5 345.3Z"/>
<circle cx="1865.5" cy="352.5" r="3.2"/>
</g>
<!-- trash -->
<g fill="none" stroke="#ff4d4f" stroke-width="1.2" stroke-linejoin="round">
<path d="M390.6 467.2H404.6M394.8 467.2V465H400.4V467.2M392.2 467.2L393.2 479H402L403 467.2"/>
</g>
<!-- select chevrons -->
<g fill="none" stroke="#bfbfbf" stroke-width="1.1">
<path d="M634 469L639.5 476.2L645 469"/>
<path d="M956 469L961.5 476.2L967 469"/>
</g>
<!-- cloud upload -->
<g fill="none" stroke="#fff" stroke-width="1.4" stroke-linecap="round" stroke-linejoin="round">
<path d="M1127.8 476.5H1126.3Q1123.3 476.3 1123.3 473.3Q1123.3 470.6 1126.1 470.2Q1127 466 1131.5 466Q1136 466 1136.8 470.2Q1139.8 470.6 1139.8 473.3Q1139.8 476.3 1136.8 476.5H1135.2"/>
<path d="M1131.5 478.2V471.2M1129.2 473.4L1131.5 471.1L1133.8 473.4"/>
<path d="M1237.8 476.5H1236.3Q1233.3 476.3 1233.3 473.3Q1233.3 470.6 1236.1 470.2Q1237 466 1241.5 466Q1246 466 1246.8 470.2Q1249.8 470.6 1249.8 473.3Q1249.8 476.3 1246.8 476.5H1245.2"/>
<path d="M1241.5 478.2V471.2M1239.2 473.4L1241.5 471.1L1243.8 473.4"/>
</g>
<!-- red arrow -->
<path d="M1389 466.3L1420 451.3V463.6L1601 464.3V470.6L1420 470V482Z" fill="#e41c1c"/>
<!-- filter icons -->
<g fill="#aaaaaa">
<path d="M631 539.3H644L640.8 546.3H634.2Z"/>
<rect x="635" y="548" width="5" height="3.3" rx="0.5"/>
<path d="M1336 539.3H1349L1345.8 546.3H1339.2Z"/>
<rect x="1340" y="548" width="5" height="3.3" rx="0.5"/>
<path d="M1855.8 539.3H1868.8L1865.6 546.3H1859.0Z"/>
<rect x="1859.8" y="548" width="5" height="3.3" rx="0.5"/>
</g>
<!-- checkmarks -->
<g fill="none" stroke="#fff" stroke-width="2.2">
<path d="M427.3 546.4L431.5 550.6L439.2 542.7"/>
<path d="M427.3 606.4L431.5 610.6L439.2 602.7"/>
<path d="M427.3 677.4L431.5 681.6L439.2 673.7"/>
<path d="M427.3 748.4L431.5 752.6L439.2 744.7"/>
<path d="M427.3 819.4L431.5 823.6L439.2 815.7"/>
<path d="M427.3 890.4L431.5 894.6L439.2 886.7"/>
</g>
<!-- plus signs -->
<g fill="none" stroke="#111" stroke-width="1.1">
<path d="M377 605.5H388.5M382.5 599.7V611.5"/>
<path d="M377 676.5H388.5M382.5 670.7V682.5"/>
<path d="M377 747.5H388.5M382.5 741.7V753.5"/>
<path d="M377 818.5H388.5M382.5 812.7V824.5"/>
<path d="M377 889.5H388.5M382.5 883.7V895.5"/>
</g>
</svg>

</body></html>
